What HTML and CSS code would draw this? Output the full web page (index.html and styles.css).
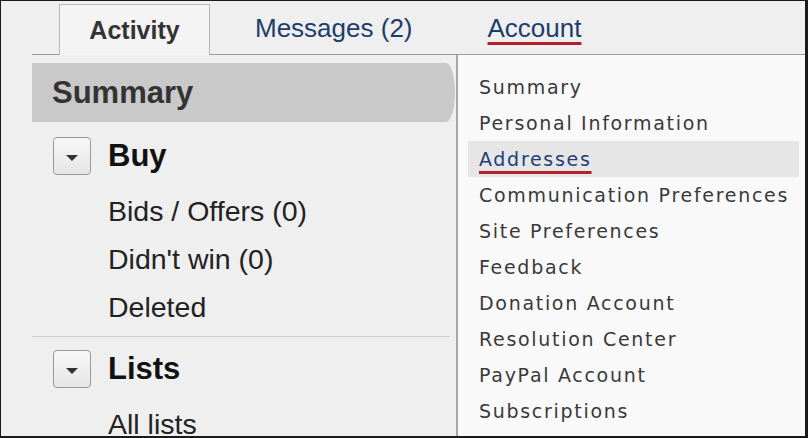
FILE: index.html
```html
<!DOCTYPE html>
<html>
<head>
<meta charset="utf-8">
<link rel="stylesheet" href="styles.css">
</head>
<body>
<div class="frame">
  <div class="tabs">
    <div class="tab tab-active">Activity</div>
    <div class="tab tab-messages">Messages (2)</div>
    <div class="tab tab-account"><span class="red-underline">Account</span></div>
  </div>
  <div class="main">
    <div class="left">
      <div class="summary">Summary</div>
      <div class="section">
        <div class="section-head">
          <span class="toggle"><span class="caret"></span></span>
          <span class="section-title">Buy</span>
        </div>
        <ul class="items">
          <li>Bids / Offers (0)</li>
          <li>Didn't win (0)</li>
          <li>Deleted</li>
        </ul>
      </div>
      <div class="section">
        <div class="section-head">
          <span class="toggle"><span class="caret"></span></span>
          <span class="section-title">Lists</span>
        </div>
        <ul class="items">
          <li>All lists</li>
        </ul>
      </div>
    </div>
    <div class="menu">
      <div class="menu-item">Summary</div>
      <div class="menu-item">Personal Information</div>
      <div class="menu-item menu-item-hover"><span class="red-underline link">Addresses</span></div>
      <div class="menu-item">Communication Preferences</div>
      <div class="menu-item">Site Preferences</div>
      <div class="menu-item">Feedback</div>
      <div class="menu-item">Donation Account</div>
      <div class="menu-item">Resolution Center</div>
      <div class="menu-item">PayPal Account</div>
      <div class="menu-item">Subscriptions</div>
    </div>
  </div>
</div>
</body>
</html>
```

FILE: styles.css
```css
* { box-sizing: border-box; }
html, body { margin: 0; padding: 0; }
body {
  width: 808px;
  height: 438px;
  overflow: hidden;
  font-family: "Liberation Sans", Arial, sans-serif;
}
.frame {
  width: 808px;
  height: 438px;
  border-style: solid;
  border-color: #1a1a1a;
  border-width: 1px 3px 2px 1px;
  background: #efefef;
  overflow: hidden;
  display: flex;
  flex-direction: column;
}
.tabs {
  height: 54px;
  margin-left: 31px;
  padding-top: 3px;
  border-bottom: 1px solid #9a9a9a;
  display: flex;
  align-items: stretch;
  flex: none;
}
.tab {
  display: flex;
  align-items: center;
  font-size: 26px;
  color: #1d3d6d;
  padding-bottom: 1px;
}
.tab-active {
  margin-left: 27px;
  width: 151px;
  justify-content: center;
  border: 1px solid #b8b8b8;
  border-bottom: none;
  margin-bottom: -1px;
  background: #f4f4f4;
  font-size: 25px;
  font-weight: bold;
  color: #333;
  padding-bottom: 0;
}
.tab-messages { margin-left: 45px; }
.tab-account { margin-left: 75px; }
.red-underline {
  text-decoration: underline;
  text-decoration-color: #b3202d;
  text-decoration-thickness: 3px;
  text-underline-offset: 5px;
}
.main {
  flex: 1;
  display: flex;
  margin-left: 31px;
  min-height: 0;
}
.left {
  width: 424px;
  flex: none;
}
.summary {
  margin-top: 8px;
  margin-bottom: 2px;
  height: 59px;
  width: 423px;
  background: #c9c9c9;
  border-top-right-radius: 9px 30px;
  border-bottom-right-radius: 9px 30px;
  display: flex;
  align-items: center;
  padding-left: 20px;
  font-size: 31px;
  font-weight: bold;
  color: #333;
}
.section {
  margin-right: 6px;
  padding-top: 13px;
  padding-bottom: 5px;
  border-bottom: 1px solid #cfcfcf;
}
.section-head {
  margin-left: 21px;
  height: 38px;
  display: flex;
  align-items: center;
}
.toggle {
  width: 38px;
  height: 38px;
  border: 1px solid #999;
  border-radius: 4px;
  background: linear-gradient(#f7f7f7, #e6e6e6);
  display: flex;
  align-items: center;
  justify-content: center;
  padding-top: 3px;
}
.caret {
  width: 0;
  height: 0;
  border-left: 6px solid transparent;
  border-right: 6px solid transparent;
  border-top: 6px solid #333;
}
.section-title {
  margin-left: 17px;
  font-size: 31px;
  font-weight: bold;
  color: #111;
}
.items {
  list-style: none;
  margin: 12px 0 0;
  padding: 0 0 0 76px;
}
.items li {
  height: 48px;
  line-height: 48px;
  font-size: 28.5px;
  color: #222;
}
.menu {
  flex: 1;
  background: #f9f9f9;
  border-left: 2px solid #a6a6a6;
  padding-top: 14px;
  font-family: "DejaVu Sans", Verdana, sans-serif;
  font-size: 19px;
  letter-spacing: 1.7px;
  color: #3a3a3a;
}
.menu-item {
  height: 36px;
  line-height: 36px;
  padding-left: 21px;
  white-space: nowrap;
}
.menu-item-hover {
  background: #e6e6e6;
  margin-left: 10px;
  margin-right: 6px;
  padding-left: 11px;
}
.link { color: #1d3f78; }
```
